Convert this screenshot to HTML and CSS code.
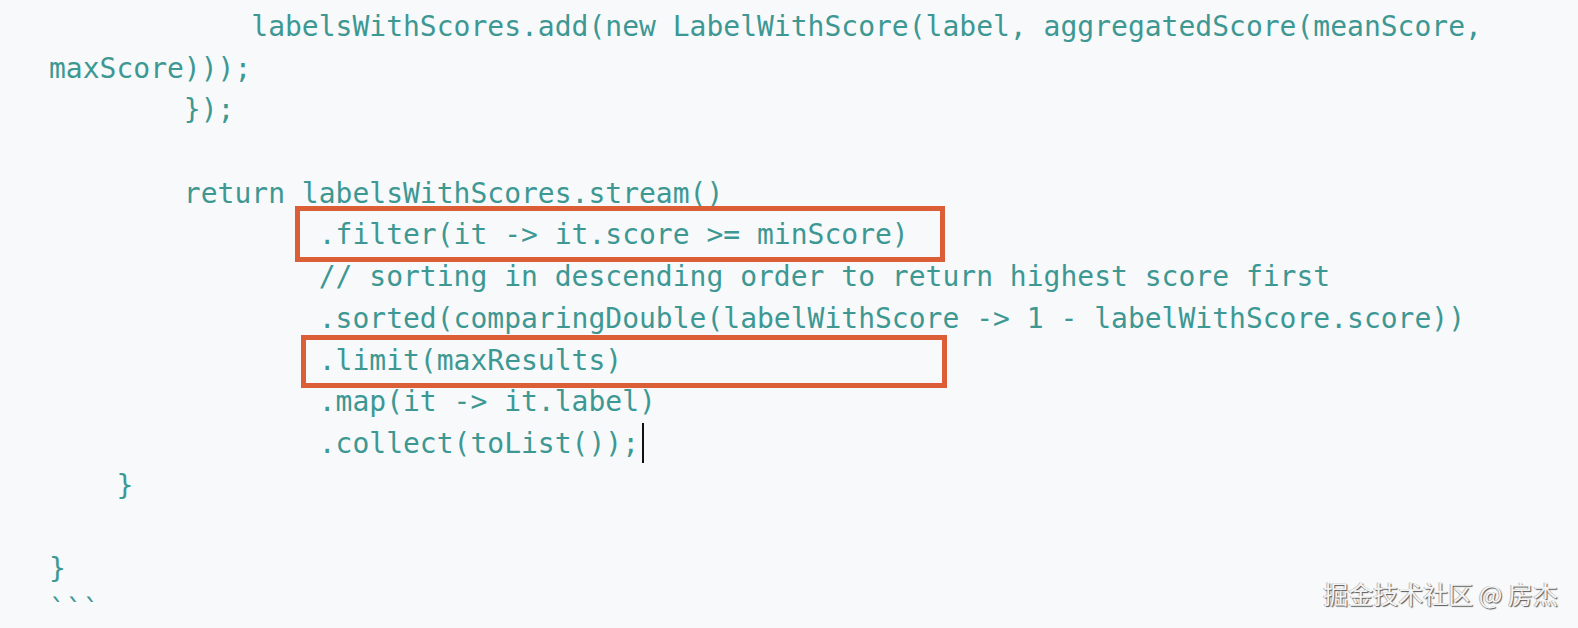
FILE: index.html
```
<!DOCTYPE html>
<html lang="zh">
<head>
<meta charset="utf-8">
<title>code</title>
<link rel="stylesheet" href="styles.css">
</head>
<body>
<div class="page">
  <div class="code">
    <div class="line">            labelsWithScores.add(new LabelWithScore(label, aggregatedScore(meanScore,</div>
    <div class="line">maxScore)));</div>
    <div class="line">        });</div>
    <div class="line"> </div>
    <div class="line">        return labelsWithScores.stream()</div>
    <div class="line mark"><span class="box box-a"></span>                .filter(it -&gt; it.score &gt;= minScore)</div>
    <div class="line">                // sorting in descending order to return highest score first</div>
    <div class="line">                .sorted(comparingDouble(labelWithScore -&gt; 1 - labelWithScore.score))</div>
    <div class="line mark"><span class="box box-b"></span>                .limit(maxResults)</div>
    <div class="line">                .map(it -&gt; it.label)</div>
    <div class="line">                .collect(toList());<span class="caret"></span></div>
    <div class="line">    }</div>
    <div class="line"> </div>
    <div class="line">}</div>
    <div class="line">```</div>
  </div>
  <div class="watermark">掘金技术社区 @ 房杰</div>
</div>
</body>
</html>
```
FILE: styles.css
```
html, body {
  margin: 0;
  padding: 0;
  background: #f8f9fb;
}
.page {
  position: relative;
  width: 1578px;
  height: 628px;
  overflow: hidden;
  background: #f8f9fb;
}
.code {
  padding: 6px 0 0 49px;
  font-family: "DejaVu Sans Mono", monospace;
  font-size: 28px;
  line-height: 41.7px;
  color: #3d9893;
}
.line {
  height: 41.7px;
  white-space: pre;
}
.mark {
  position: relative;
}
.box {
  position: absolute;
  box-sizing: border-box;
  border: 5px solid #dc5e36;
}
.box-a {
  left: 246px;
  top: -8px;
  width: 650px;
  height: 56px;
}
.box-b {
  left: 252px;
  top: -5px;
  width: 646px;
  height: 53px;
}
.caret {
  display: inline-block;
  width: 2px;
  height: 40px;
  background: #111;
  vertical-align: -10px;
  margin-left: 3px;
}
.watermark {
  position: absolute;
  right: 20px;
  bottom: 20px;
  font-family: "Noto Sans CJK SC", sans-serif;
  font-size: 25px;
  line-height: 30px;
  color: #f4f4f4;
  text-shadow: 1px 1px 1px #555, -1px 0 0 #bbb;
}
```
